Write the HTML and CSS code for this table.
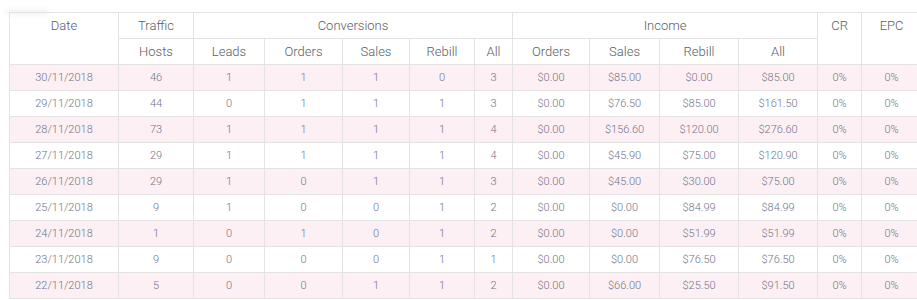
FILE: index.html
```html
<!DOCTYPE html>
<html>
<head>
<meta charset="utf-8">
<link rel="stylesheet" href="styles.css">
</head>
<body>
<div class="page">
  <div class="top-shadow"></div>
  <table class="stats">
    <colgroup>
      <col class="c-date"><col class="c-hosts"><col class="c-leads"><col class="c-orders"><col class="c-sales"><col class="c-rebill"><col class="c-all"><col class="c-iorders"><col class="c-isales"><col class="c-irebill"><col class="c-iall"><col class="c-cr"><col class="c-epc">
    </colgroup>
    <thead>
      <tr>
        <th rowspan="2">Date</th>
        <th>Traffic</th>
        <th colspan="5">Conversions</th>
        <th colspan="4">Income</th>
        <th rowspan="2">CR</th>
        <th rowspan="2">EPC</th>
      </tr>
      <tr>
        <th>Hosts</th>
        <th>Leads</th>
        <th>Orders</th>
        <th>Sales</th>
        <th>Rebill</th>
        <th>All</th>
        <th>Orders</th>
        <th>Sales</th>
        <th>Rebill</th>
        <th>All</th>
      </tr>
    </thead>
    <tbody>
      <tr><td>30/11/2018</td><td>46</td><td>1</td><td>1</td><td>1</td><td>0</td><td>3</td><td>$0.00</td><td>$85.00</td><td>$0.00</td><td>$85.00</td><td>0%</td><td>0%</td></tr>
      <tr><td>29/11/2018</td><td>44</td><td>0</td><td>1</td><td>1</td><td>1</td><td>3</td><td>$0.00</td><td>$76.50</td><td>$85.00</td><td>$161.50</td><td>0%</td><td>0%</td></tr>
      <tr><td>28/11/2018</td><td>73</td><td>1</td><td>1</td><td>1</td><td>1</td><td>4</td><td>$0.00</td><td>$156.60</td><td>$120.00</td><td>$276.60</td><td>0%</td><td>0%</td></tr>
      <tr><td>27/11/2018</td><td>29</td><td>1</td><td>1</td><td>1</td><td>1</td><td>4</td><td>$0.00</td><td>$45.90</td><td>$75.00</td><td>$120.90</td><td>0%</td><td>0%</td></tr>
      <tr><td>26/11/2018</td><td>29</td><td>1</td><td>0</td><td>1</td><td>1</td><td>3</td><td>$0.00</td><td>$45.00</td><td>$30.00</td><td>$75.00</td><td>0%</td><td>0%</td></tr>
      <tr><td>25/11/2018</td><td>9</td><td>1</td><td>0</td><td>0</td><td>1</td><td>2</td><td>$0.00</td><td>$0.00</td><td>$84.99</td><td>$84.99</td><td>0%</td><td>0%</td></tr>
      <tr><td>24/11/2018</td><td>1</td><td>0</td><td>1</td><td>0</td><td>1</td><td>2</td><td>$0.00</td><td>$0.00</td><td>$51.99</td><td>$51.99</td><td>0%</td><td>0%</td></tr>
      <tr><td>23/11/2018</td><td>9</td><td>0</td><td>0</td><td>0</td><td>1</td><td>1</td><td>$0.00</td><td>$0.00</td><td>$76.50</td><td>$76.50</td><td>0%</td><td>0%</td></tr>
      <tr><td>22/11/2018</td><td>5</td><td>0</td><td>0</td><td>1</td><td>1</td><td>2</td><td>$0.00</td><td>$66.00</td><td>$25.50</td><td>$91.50</td><td>0%</td><td>0%</td></tr>
    </tbody>
  </table>
</div>
</body>
</html>
```
FILE: styles.css
```css
html, body {
  margin: 0;
  padding: 0;
  background: #ffffff;
  overflow: hidden;
}
.page {
  padding: 0 0 0 9px;
  font-family: Roboto, "Noto Sans", sans-serif;
}
.top-shadow {
  height: 0;
  width: 40px;
  margin-left: -2px;
  margin-bottom: 12px;
  box-shadow: 0 0 5px 1px rgba(180, 150, 160, 0.35);
}
.stats {
  border-collapse: collapse;
  table-layout: fixed;
  width: 912px;
}
.c-date { width: 109px; }
.c-hosts { width: 75px; }
.c-leads { width: 71px; }
.c-orders { width: 78px; }
.c-sales { width: 67px; }
.c-rebill { width: 65px; }
.c-all { width: 38px; }
.c-iorders { width: 77px; }
.c-isales { width: 70px; }
.c-irebill { width: 79px; }
.c-iall { width: 79px; }
.c-cr { width: 44px; }
.c-epc { width: 60px; }
.stats th,
.stats td {
  border: 1px solid #e3e3e3;
  text-align: center;
  padding: 0;
  height: 25px;
  white-space: nowrap;
}
.stats th {
  font-weight: 300;
  font-size: 13px;
  color: #5a5e66;
  vertical-align: middle;
}
.stats th[rowspan] {
  vertical-align: top;
  padding-top: 5px;
}
.stats td {
  font-size: 11px;
  color: #70748a;
  font-weight: 300;
}
.stats tbody tr:nth-child(odd) td {
  background: #fdf0f4;
}
```
